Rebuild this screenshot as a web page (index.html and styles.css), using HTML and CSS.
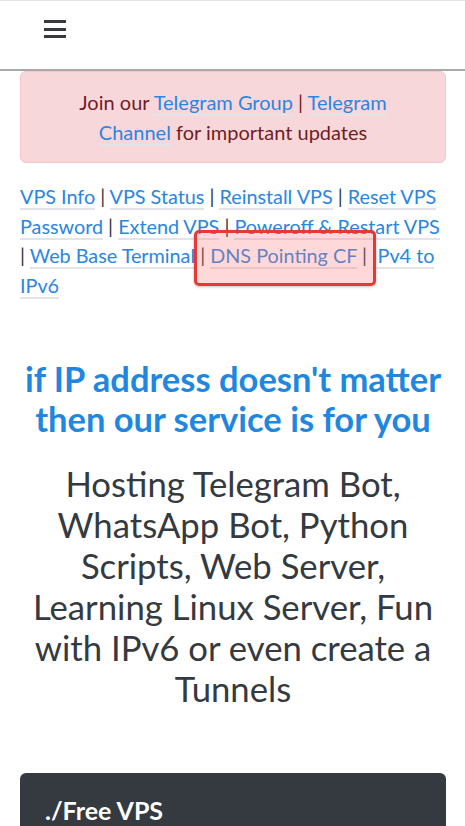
FILE: index.html
```html
<!DOCTYPE html>
<html lang="en">
<head>
  <meta charset="UTF-8">
  <meta name="viewport" content="width=device-width, initial-scale=1.0">
  <title>Free VPS</title>
  <link rel="stylesheet" href="styles.css">
</head>
<body>
  <nav class="navbar">
    <button class="menu-toggle" aria-label="Menu">
      <span></span><span></span><span></span>
    </button>
  </nav>

  <main class="container">
    <div class="alert">
      Join our <a href="#">Telegram Group</a> | <a href="#">Telegram Channel</a> for important updates
    </div>

    <div class="quick-links">
      <a href="#">VPS Info</a> | <a href="#">VPS Status</a> | <a href="#">Reinstall VPS</a> | <a href="#">Reset VPS Password</a> | <a href="#">Extend VPS</a> | <a href="#">Poweroff &amp; Restart VPS</a> | <a href="#">Web Base Terminal</a> | <a href="#">DNS Pointing CF</a> | <a href="#">IPv4 to IPv6</a>
      <!-- screenshot annotation -->
      <div class="highlight"></div>
    </div>

    <section class="hero">
      <h2 class="hero-title">if IP address doesn't matter then our service is for you</h2>
      <p class="hero-text">Hosting Telegram Bot, WhatsApp Bot, Python Scripts, Web Server, Learning Linux Server, Fun with IPv6 or even create a Tunnels</p>
    </section>

    <div class="card">
      <div class="card-title">./Free VPS</div>
    </div>
  </main>
</body>
</html>
```

FILE: styles.css
```css
body {
  font-family: Lato, "Open Sans", sans-serif;
  margin: 0;
  background: #fff;
  color: #343a40;
  border-top: 1px solid #e3e3e3;
}

.navbar {
  height: 68px;
  border-bottom: 2px solid #a9a9a9;
  display: flex;
  align-items: center;
  padding: 0 44px;
}

.menu-toggle {
  background: none;
  border: 0;
  padding: 0;
  margin-top: -12px;
  width: 22px;
  display: flex;
  flex-direction: column;
  gap: 4.5px;
  cursor: pointer;
}

.menu-toggle span {
  display: block;
  height: 3px;
  background: #343a40;
}

.container {
  padding: 0 19px 0 20px;
}

.alert {
  background: #f8d7da;
  border: 1px solid #f5c6cb;
  color: #721c24;
  border-radius: 6px;
  padding: 15px 20px;
  font-size: 20px;
  line-height: 30px;
  text-align: center;
}

.alert a,
.quick-links a {
  color: #2a86e0;
  text-decoration: none;
  border-bottom: 2px solid #e2e4e8;
}

.quick-links {
  position: relative;
  margin-top: 19px;
  font-size: 19.8px;
  line-height: 29.5px;
  color: #343a40;
}

.highlight {
  position: absolute;
  left: 174px;
  top: 48px;
  width: 182px;
  height: 56px;
  box-sizing: border-box;
  border: 3px solid #e53935;
  border-radius: 5px;
  background: rgba(255, 120, 120, 0.28);
  box-shadow: 0 1px 3px rgba(0, 0, 0, 0.25);
}

.hero {
  text-align: center;
  padding-top: 59px;
}

.hero-title {
  margin: 0;
  color: #1f87e0;
  font-size: 34.5px;
  font-weight: 700;
  line-height: 40px;
}

.hero-text {
  margin: 24px 0 0;
  font-size: 34.7px;
  line-height: 41px;
  color: #343a40;
}

.card {
  margin-top: 64px;
  background: #343a40;
  border-radius: 6px;
  padding: 22px 25px;
  height: 120px;
}

.card-title {
  color: #fff;
  font-size: 25px;
  font-weight: 700;
}
```
